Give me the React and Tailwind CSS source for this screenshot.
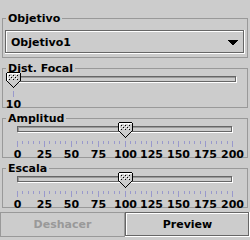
import React from 'react';

const SLIDER_W = 238;

// Metal style pointed thumb, 15x16
const Thumb = ({ x }) => {
  const fillRows = [
    [2, 9, 11],
    [3, 10, 9],
    [4, 11, 7],
    [5, 12, 5],
    [6, 13, 3],
    [7, 14, 1],
  ];
  const hi = [];
  const sh = [];
  for (let by = 0; by < 6; by++) {
    for (let bx = 0; bx < 10; bx++) {
      if ((bx % 4 === 0 && by % 4 === 0) || (bx % 4 === 2 && by % 4 === 2)) hi.push([bx + 2, by + 2]);
      if ((bx % 4 === 1 && by % 4 === 1) || (bx % 4 === 3 && by % 4 === 3)) sh.push([bx + 2, by + 2]);
    }
  }
  return (
    <g transform={`translate(${x},0)`}>
      <rect x={1} y={1} width={13} height={8} fill="#cccccc" />
      {fillRows.map(([rx, ry, w]) => (
        <rect key={`f${ry}`} x={rx} y={ry} width={w} height={1} fill="#cccccc" />
      ))}
      {hi.map(([px, py]) => (
        <rect key={`h${px}-${py}`} x={px} y={py} width={1} height={1} fill="#ffffff" />
      ))}
      {sh.map(([px, py]) => (
        <rect key={`s${px}-${py}`} x={px} y={py} width={1} height={1} fill="#000000" />
      ))}
      <rect x={1} y={1} width={13} height={1} fill="#ffffff" />
      <rect x={1} y={1} width={1} height={8} fill="#ffffff" />
      <rect x={1} y={0} width={13} height={1} fill="#000000" />
      <rect x={0} y={1} width={1} height={8} fill="#000000" />
      <rect x={14} y={1} width={1} height={8} fill="#000000" />
      {[0, 1, 2, 3, 4, 5, 6].map((i) => (
        <rect key={`l${i}`} x={1 + i} y={9 + i} width={1} height={1} fill="#000000" />
      ))}
      {[0, 1, 2, 3, 4, 5, 6].map((i) => (
        <rect key={`r${i}`} x={8 + i} y={14 - i} width={1} height={1} fill="#000000" />
      ))}
    </g>
  );
};

const Slider = ({ min, max, value, buffer, minorStep, majorStep, labels }) => {
  const left = buffer;
  const right = SLIDER_W - 1 - buffer;
  const xOf = (v) => left + Math.round(((right - left) / (max - min)) * (v - min));

  const ticks = [];
  if (minorStep) {
    for (let v = min; v <= max; v += minorStep) {
      if ((v - min) % majorStep !== 0) ticks.push({ v, major: false });
    }
  }
  for (let v = min; v <= max; v += majorStep) ticks.push({ v, major: true });

  const L = left;
  const R = right;

  return (
    <div className="relative ml-[3px] -mt-[3px] -mb-px h-[36px] w-[238px]">
      <svg className="absolute left-0 top-0" width={SLIDER_W} height={36} shapeRendering="crispEdges">
        {/* track */}
        <rect x={L} y={4} width={R - L} height={1} fill="#666666" />
        <rect x={L} y={9} width={R - L} height={1} fill="#666666" />
        <rect x={L} y={4} width={1} height={6} fill="#666666" />
        <rect x={R - 1} y={4} width={1} height={6} fill="#666666" />
        <rect x={L + 1} y={5} width={R - L - 2} height={1} fill="#999999" />
        <rect x={L + 1} y={5} width={1} height={4} fill="#999999" />
        <rect x={L + 1} y={10} width={R - L} height={1} fill="#ffffff" />
        <rect x={R} y={5} width={1} height={6} fill="#ffffff" />
        {/* ticks */}
        {ticks.map((t) => (
          <rect
            key={`${t.v}-${t.major}`}
            x={xOf(t.v)}
            y={19}
            width={1}
            height={t.major ? 6 : 3}
            fill="#9999cc"
          />
        ))}
        <Thumb x={xOf(value) - 7} />
      </svg>
      {labels.map((v) => (
        <span
          key={v}
          className="absolute top-[26px] -translate-x-1/2 whitespace-nowrap leading-[13px]"
          style={{ left: xOf(v) + 0.5 }}
        >
          {v}
        </span>
      ))}
    </div>
  );
};

const Panel = ({ title, children }) => (
  <fieldset className="ml-[2px] w-[246px] border border-[#999999]">
    <legend className="ml-[3px] px-[2px] leading-[13px]">{title}</legend>
    {children}
  </fieldset>
);

// raised flush 3D border: dark outer, white inner
const Raised = ({ className, children }) => (
  <div className={`border-b border-r border-white ${className}`}>
    <div className="h-full border border-[#666666]">
      <div className="flex h-full items-center border-l border-t border-white">{children}</div>
    </div>
  </div>
);

const scale = [0, 25, 50, 75, 100, 125, 150, 175, 200];

export default function App() {
  return (
    <div className="flex h-[240px] w-[250px] flex-col bg-[#cccccc] font-['DejaVu_Sans',sans-serif] text-[11px] font-bold leading-[13px] text-black">
      <div className="mt-[12px] flex flex-col gap-[4px]">
        <Panel title="Objetivo">
          <Raised className="mx-[2px] mt-[5px] mb-[3px] h-[24px]">
            <div className="flex w-full items-center justify-between pl-[4px] pr-[5px]">
              <span>Objetivo1</span>
              <svg width="10" height="5" shapeRendering="crispEdges">
                <rect x="0" y="0" width="10" height="1" fill="#000" />
                <rect x="1" y="1" width="8" height="1" fill="#000" />
                <rect x="2" y="2" width="6" height="1" fill="#000" />
                <rect x="3" y="3" width="4" height="1" fill="#000" />
                <rect x="4" y="4" width="2" height="1" fill="#000" />
              </svg>
            </div>
          </Raised>
        </Panel>
        <Panel title="Dist. Focal">
          <Slider min={10} max={100} value={10} buffer={7} majorStep={100} labels={[10]} />
        </Panel>
        <Panel title="Amplitud">
          <Slider min={0} max={200} value={100} buffer={11} minorStep={5} majorStep={25} labels={scale} />
        </Panel>
        <Panel title="Escala">
          <Slider min={0} max={200} value={100} buffer={11} minorStep={5} majorStep={25} labels={scale} />
        </Panel>
      </div>
      <div className="mt-[4px] grid h-[25px] grid-cols-2">
        <button className="flex h-[25px] items-center justify-center border border-[#999999] text-[#999999]" disabled>
          Deshacer
        </button>
        <Raised className="h-[25px]">
          <span className="w-full text-center">Preview</span>
        </Raised>
      </div>
    </div>
  );
}
